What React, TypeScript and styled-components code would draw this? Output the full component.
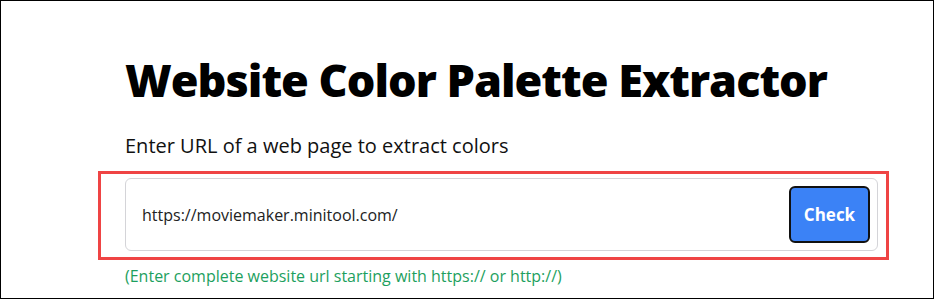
import React from "react";
import styled, { createGlobalStyle } from "styled-components";

const Global = createGlobalStyle`
  html, body { margin: 0; padding: 0; background: #fff; }
  * { box-sizing: border-box; }
`;

const Frame = styled.div`
  width: 934px;
  height: 299px;
  border: 1px solid #000;
  overflow: hidden;
  background: #fff;
  font-family: "Open Sans", "Noto Sans", sans-serif;
  padding: 48px 0 0 124px;
  display: flex;
  flex-direction: column;
`;

const Title = styled.h1`
  margin: 0;
  font-size: 45px;
  font-weight: 800;
  line-height: 61px;
  color: #000;
  letter-spacing: -1px;
`;

const Subtitle = styled.p`
  margin: 22px 0 0;
  font-size: 20px;
  line-height: 27px;
  color: #111;
`;

const Highlight = styled.div`
  margin: 12px 0 0 -27px;
  width: 791px;
  border: 3px solid #ef4444;
  padding: 4px 8px 6px 24px;
`;

const Field = styled.div`
  height: 73px;
  border: 1px solid #d4d4d8;
  border-radius: 6px;
  display: flex;
  align-items: center;
  justify-content: space-between;
  padding: 0 7px 0 16px;
`;

const Url = styled.span`
  font-size: 16px;
  color: #222;
`;

const CheckButton = styled.button`
  width: 81px;
  height: 57px;
  border: 2px solid #111;
  border-radius: 6px;
  background: #3b82f6;
  color: #fff;
  font-family: "Open Sans", "Noto Sans", sans-serif;
  font-weight: 700;
  font-size: 17px;
  cursor: pointer;
`;

const Hint = styled.p`
  margin: 5px 0 0;
  font-size: 16px;
  line-height: 22px;
  color: #1d9f5e;
`;

export default function App() {
  return (
    <>
      <Global />
      <Frame>
        <Title>Website Color Palette Extractor</Title>
        <Subtitle>Enter URL of a web page to extract colors</Subtitle>
        <Highlight>
          <Field>
            <Url>https://moviemaker.minitool.com/</Url>
            <CheckButton>Check</CheckButton>
          </Field>
        </Highlight>
        <Hint>(Enter complete website url starting with https:// or http://)</Hint>
      </Frame>
    </>
  );
}
